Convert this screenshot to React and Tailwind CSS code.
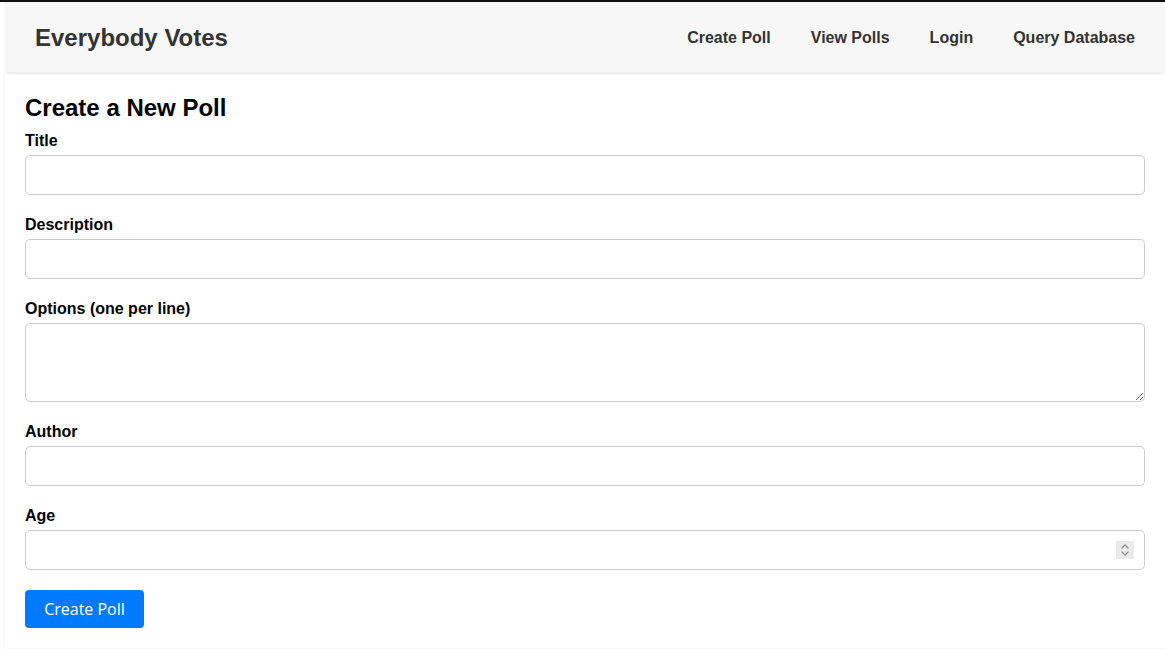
import React from "react";

const Field = ({ label, children }) => (
  <div className="mb-5">
    <label className="block text-base font-bold leading-[20px] mb-[4px] text-black">{label}</label>
    {children}
  </div>
);

const inputCls =
  "block w-full h-10 px-2.5 border border-[#cccccc] rounded-[5px] bg-white text-base outline-none";

const App = () => {
  return (
    <div className="min-h-screen bg-white font-['Liberation_Sans',Arial,sans-serif]">
      <div className="h-[2px] bg-[#111]" />
      <header className="ml-[5px] h-[70px] bg-[#f7f7f7] flex items-center justify-between pl-[30px] pr-[30px] shadow-[0_2px_4px_rgba(0,0,0,0.06)] relative z-10">
        <h1 className="text-[24px] font-bold text-[#333] mt-[2px]">Everybody Votes</h1>
        <nav className="flex gap-[40px] text-base font-bold text-[#333] mt-[2px]">
          <a href="#">Create Poll</a>
          <a href="#">View Polls</a>
          <a href="#">Login</a>
          <a href="#">Query Database</a>
        </nav>
      </header>
      <main className="ml-[5px] mt-[2px] bg-white p-5 shadow-[0_0_4px_rgba(0,0,0,0.08)]">
        <h2 className="text-[24px] font-bold leading-[28px] mb-[9px] text-black">Create a New Poll</h2>
        <form onSubmit={(e) => e.preventDefault()}>
          <Field label="Title">
            <input type="text" className={inputCls} />
          </Field>
          <Field label="Description">
            <input type="text" className={inputCls} />
          </Field>
          <Field label="Options (one per line)">
            <textarea className="block w-full h-[79px] px-2.5 py-2 border border-[#cccccc] rounded-[5px] bg-white text-base outline-none resize-y" />
          </Field>
          <Field label="Author">
            <input type="text" className={inputCls} />
          </Field>
          <Field label="Age">
            <div className="relative">
              <input type="number" className={inputCls} />
              <span className="pointer-events-none absolute right-[11px] top-[11px] w-[18px] h-[18px] bg-[#ebebeb] flex items-center justify-center">
                <svg width="10" height="14" viewBox="0 0 10 14" fill="none" stroke="#8a8a8a" strokeWidth="1.2" strokeLinecap="round" strokeLinejoin="round">
                  <path d="M2 5l3-3 3 3" />
                  <path d="M2 9l3 3 3-3" />
                </svg>
              </span>
            </div>
          </Field>
          <button
            type="submit"
            className="h-[38px] w-[119px] rounded-[4px] bg-[#007bff] text-white text-base font-['Open_Sans',sans-serif]"
          >
            Create Poll
          </button>
        </form>
      </main>
    </div>
  );
};

export default App;
